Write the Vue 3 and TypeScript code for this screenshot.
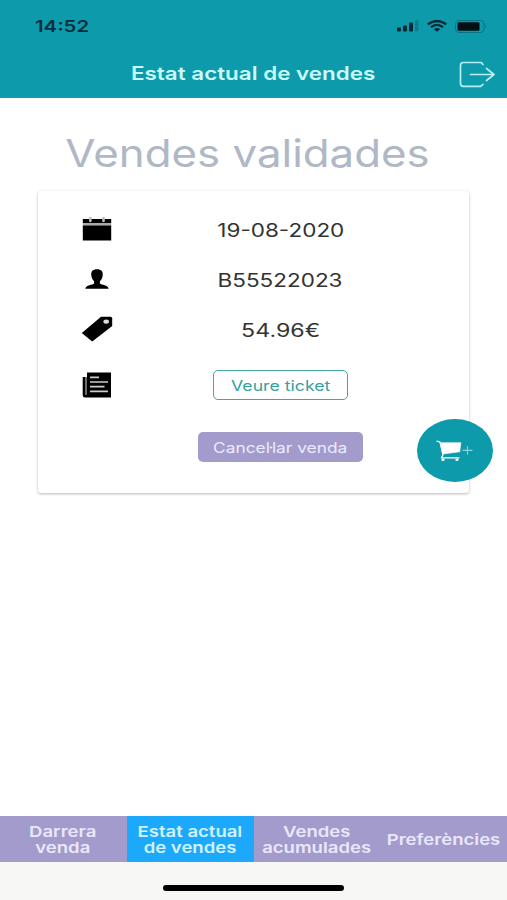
<script setup lang="ts">
import { ref } from 'vue'

interface SaleRow {
  icon: 'calendar' | 'person' | 'tag'
  value: string
  kind: string
}

interface Tab {
  lines: string[]
  kind: string
}

const rows: SaleRow[] = [
  { icon: 'calendar', value: '19-08-2020', kind: 'date' },
  { icon: 'person', value: 'B55522023', kind: 'code' },
  { icon: 'tag', value: '54.96€', kind: 'price' },
]

const tabs: Tab[] = [
  { lines: ['Darrera', 'venda'], kind: 'last' },
  { lines: ['Estat actual', 'de vendes'], kind: 'state' },
  { lines: ['Vendes', 'acumulades'], kind: 'total' },
  { lines: ['Preferències'], kind: 'prefs' },
]

const activeTab = ref(1)
</script>

<template>
  <div class="screen">
    <header class="header">
      <div class="status">
        <span class="wide clock">14:52</span>
        <div class="indicators">
          <svg class="signal" width="22" height="12" viewBox="0 0 22 12">
            <rect x="0" y="7.5" width="4" height="4" rx="1" />
            <rect x="6" y="5.5" width="4" height="6" rx="1" />
            <rect x="12" y="2.5" width="4" height="9" rx="1" />
            <rect x="18" y="0" width="3.4" height="11.5" rx="1" opacity=".25" />
          </svg>
          <svg width="20" height="12" viewBox="0 0 20 12" fill="none" stroke="#062a35" stroke-width="2.3">
            <path d="M.8 4.3Q10-2.4 19.2 4.3" />
            <path d="M4 7.2Q10 2.6 16 7.2" />
            <path d="M6.8 9.2Q10 7 13.2 9.2L10 11.8Z" fill="#062a35" stroke="none" />
          </svg>
          <svg width="33" height="13" viewBox="0 0 33 13">
            <rect x=".5" y=".5" width="28.5" height="12" rx="3.5" fill="none" stroke="#087583" />
            <rect x="2.5" y="2.3" width="22" height="8.4" rx="1.5" fill="#021016" />
            <path d="M30.3 4.5Q32.3 6.5 30.3 8.5Z" fill="#087583" />
          </svg>
        </div>
      </div>
      <div class="titlebar">
        <h1 class="wide title">Estat actual de vendes</h1>
        <button class="exit" aria-label="Sortir">
          <svg width="37" height="27" viewBox="0 0 37 27" fill="none" stroke="#b4f0f3" stroke-width="1.7" stroke-linecap="round" stroke-linejoin="round">
            <path d="M24 3.5 22.3 1.5H4.5Q1.5 1.5 1.5 4.3V22.5Q1.5 25.3 4.5 25.3H21.5L24 23.3" />
            <path d="M11.5 13.5H35M27.5 7.5 35 13.5 27.5 19.5" />
          </svg>
        </button>
      </div>
    </header>

    <main class="content">
      <h2 class="wide heading">Vendes validades</h2>
      <section class="card">
        <div v-for="row in rows" :key="row.icon" class="row">
          <div class="icon-cell">
            <svg v-if="row.icon === 'calendar'" width="30" height="24" viewBox="0 0 30 24">
              <path d="M.8 2H29.2V6H.8ZM.8 8.3H29.2V23.5H.8Z" />
              <path d="M.8 6H29.2V8.3H.8Z" fill="#aaa" />
              <path d="M8.3.9V4M21.5.9V4" stroke="#bbb" stroke-width="2.6" stroke-linecap="round" />
            </svg>
            <svg v-else-if="row.icon === 'person'" width="24" height="20" viewBox="0 0 24 20">
              <path d="M12 .3C7.7.3 5.8 2.5 6.3 6.3 6.5 9 7.5 10.8 9.1 12.2V14.5C7.5 16.2 1 15.7.3 19.7H23.7C23 15.7 16.5 16.2 14.9 14.5V12.2C16.5 10.8 17.5 9 17.7 6.3 18.2 2.5 16.3.3 12 .3Z" />
            </svg>
            <svg v-else width="32" height="26" viewBox="0 0 32 26">
              <path d="M20 .8H29.5Q31.2.8 31.2 2.3V10L11.2 25.6.8 17Z" />
              <ellipse cx="25.2" cy="5.6" rx="2.8" ry="2.2" fill="#ddd" />
            </svg>
          </div>
          <div class="value-cell"><span class="wide value" :class="row.kind">{{ row.value }}</span></div>
        </div>
        <div class="row ticket-row">
          <div class="icon-cell">
            <svg width="30" height="26" viewBox="0 0 30 26">
              <path d="M5 .5H29V25.5H3Q.7 25.5.7 23.2V5H5Z" />
              <path d="M4 5V22.8" stroke="#aaa" stroke-width="1.3" />
              <path d="M8 5.3H17M8 10H26M8 14.7H22.5M8 19.4H26" stroke="#ccc" stroke-width="1.7" />
            </svg>
          </div>
          <div class="value-cell">
            <button class="btn outline"><span class="wide view">Veure ticket</span></button>
          </div>
        </div>
        <div class="row cancel-row">
          <div class="value-cell">
            <button class="btn filled"><span class="wide cancel">Canceŀlar venda</span></button>
          </div>
        </div>
      </section>
      <button class="fab" aria-label="Nova venda">
        <svg width="38" height="22" viewBox="0 0 38 22" fill="none" stroke="#fff" stroke-linecap="round" stroke-linejoin="round">
          <path d="M1 1.2 4 2.2 7 14.5 5.5 17.8H23" stroke-width="1.3" />
          <path d="M4.8 2.7H24.8L23.8 11.8 7 14Z" fill="#fff" stroke-width=".6" />
          <ellipse cx="7" cy="19.8" rx="1.6" ry="1.3" fill="#fff" stroke="none" />
          <ellipse cx="21" cy="19.8" rx="1.6" ry="1.3" fill="#fff" stroke="none" />
          <path d="M27 10.4H36M31.5 6.5V14.3" stroke="#8ad3d9" stroke-width="1.1" />
        </svg>
      </button>
    </main>

    <footer class="footer">
      <nav class="tabs">
        <button
          v-for="(tab, i) in tabs"
          :key="tab.kind"
          class="tab"
          :class="{ active: i === activeTab }"
          @click="activeTab = i"
        >
          <span v-for="line in tab.lines" :key="line" class="wide">{{ line }}</span>
        </button>
      </nav>
      <div class="home"><div class="home-bar"></div></div>
    </footer>
  </div>
</template>

<style>
body {
  margin: 0;
}
</style>

<style scoped>
.screen {
  width: 507px;
  height: 900px;
  display: flex;
  flex-direction: column;
  overflow: hidden;
  background: #fff;
  font-family: Inter, "Liberation Sans", sans-serif;
}
button {
  border: 0;
  padding: 0;
  margin: 0;
  background: none;
  font: inherit;
  color: inherit;
}
svg {
  display: block;
}
.wide {
  display: block;
  white-space: nowrap;
  transform: scaleX(1.22);
}
.header {
  height: 98px;
  box-sizing: border-box;
  background: #0d9bab;
  border-bottom: 1px solid #388f9a;
  flex: none;
}
.status {
  height: 52px;
  display: flex;
  justify-content: space-between;
  align-items: center;
  padding: 0 19px 0 35px;
}
.clock {
  transform: scaleX(1.27);
  transform-origin: left;
  font-size: 16px;
  font-weight: 600;
  color: #06303d;
}
.indicators {
  display: flex;
  align-items: center;
  gap: 8px;
}
.signal {
  fill: #062a35;
}
.titlebar {
  height: 44px;
  display: grid;
  grid-template-columns: 1fr auto 1fr;
  align-items: center;
  padding-right: 11px;
  padding-left: 11px;
}
.title {
  grid-column: 2;
  margin: 0 0 2px;
  font-size: 18px;
  font-weight: 600;
  color: #c9fafb;
  transform: scaleX(1.245);
}
.exit {
  justify-self: end;
}
.content {
  position: relative;
  flex: 1;
}
.heading {
  margin: 31px 12px 0 0;
  text-align: center;
  font-size: 38px;
  line-height: 48px;
  font-weight: 400;
  color: #b0b8c6;
  transform: scaleX(1.153);
}
.card {
  margin: 14px 38px 0 38px;
  height: 302px;
  box-sizing: border-box;
  padding-top: 13px;
  border-radius: 3px;
  box-shadow: 0 1px 3px rgba(0, 0, 0, 0.28);
}
.row {
  height: 50px;
  display: grid;
  grid-template-columns: 118px 249px;
  align-items: center;
}
.icon-cell,
.value-cell {
  display: flex;
  justify-content: center;
}
.ticket-row {
  height: 61px;
}
.cancel-row {
  height: 64px;
}
.cancel-row .value-cell {
  grid-column: 2;
}
.value {
  padding-top: 3px;
  font-size: 18px;
  line-height: 26px;
  color: #333;
  transform: scaleX(1.25);
}
.value.price {
  transform: scaleX(1.29);
}
.btn {
  height: 30px;
  display: flex;
  align-items: center;
  justify-content: center;
  border-radius: 5px;
  font-size: 14.5px;
}
.outline {
  width: 135px;
  box-sizing: border-box;
  border: 1.5px solid #45a6a8;
  color: #36a09f;
}
.view {
  padding-top: 1px;
}
.filled {
  width: 165px;
  background: #a29bcb;
  color: #eeeafe;
}
.cancel {
  transform: scaleX(1.195);
}
.fab {
  position: absolute;
  left: 417px;
  top: 321px;
  width: 76px;
  height: 63px;
  border-radius: 50%;
  background: #0d9bab;
  display: flex;
  align-items: center;
  justify-content: center;
}
.footer {
  flex: none;
  height: 84px;
  background: #f7f7f6;
}
.tabs {
  display: grid;
  grid-template-columns: repeat(4, 1fr);
  height: 46px;
}
.tab {
  display: flex;
  flex-direction: column;
  align-items: center;
  justify-content: center;
  padding-top: 2px;
  background: #a29bcb;
  color: #eae7fb;
  font-size: 15px;
  line-height: 16px;
  font-weight: 600;
}
.tab.active {
  background: #1da9fb;
  color: #d2f3ff;
}
.tab .wide {
  transform: translateX(-0.5px) scaleX(1.235);
}
.home {
  display: flex;
  justify-content: center;
  padding-top: 23px;
}
.home-bar {
  width: 181px;
  height: 6px;
  border-radius: 3px;
  background: #000;
}
</style>
